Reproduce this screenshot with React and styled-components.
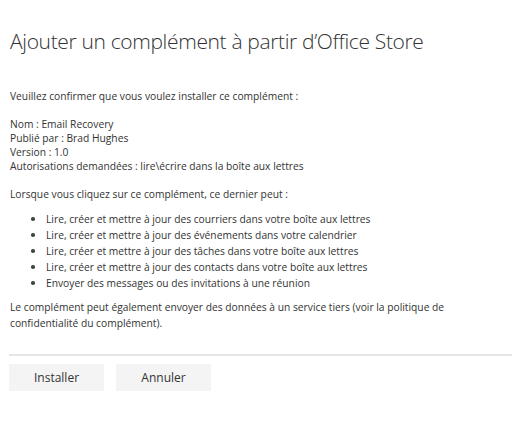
import React from 'react';
import styled, { createGlobalStyle } from 'styled-components';

const GlobalStyle = createGlobalStyle`
  html, body {
    margin: 0;
    padding: 0;
    background: #ffffff;
  }
  body {
    font-family: "Open Sans", "Noto Sans", sans-serif;
    color: #333333;
  }
`;

const Dialog = styled.div`
  width: 503px;
  padding: 26px 0 0 9px;
  box-sizing: content-box;
`;

const Title = styled.h1`
  margin: 0 0 0 1px;
  font-size: 21px;
  font-weight: 300;
  line-height: 30px;
  color: #333333;
  letter-spacing: -0.35px;
`;

const Body = styled.div`
  margin: 33px 0 0 1px;
  font-size: 10.25px;
  line-height: 14px;
  color: #333333;
  max-width: 450px;
`;

const Paragraph = styled.p`
  margin: 0 0 ${({ $gap }) => ($gap === undefined ? 14 : $gap)}px 0;
  line-height: ${({ $lh }) => $lh || 14}px;
`;

const Perms = styled.ul`
  margin: 0 0 8px 0;
  padding: 0 0 0 21px;
  line-height: 16px;
  list-style: none;
`;

const Perm = styled.li`
  display: flex;
  align-items: center;

  &::before {
    content: '';
    flex: none;
    width: 3.5px;
    height: 3.5px;
    border-radius: 50%;
    background: #444444;
    margin-right: 11.5px;
  }
`;

const Divider = styled.hr`
  margin: 23px 0 0 0;
  border: none;
  height: 2px;
  background: #e6e6e6;
`;

const Actions = styled.div`
  display: flex;
  gap: 12px;
  margin-top: 8px;
`;

const Button = styled.button`
  width: 95px;
  height: 27px;
  border: none;
  background: #f4f4f4;
  color: #333333;
  font-family: "Open Sans", "Noto Sans", sans-serif;
  font-size: 12px;
  padding: 0;
  cursor: pointer;
`;

const permissions = [
  'Lire, créer et mettre à jour des courriers dans votre boîte aux lettres',
  'Lire, créer et mettre à jour des événements dans votre calendrier',
  'Lire, créer et mettre à jour des tâches dans votre boîte aux lettres',
  'Lire, créer et mettre à jour des contacts dans votre boîte aux lettres',
  'Envoyer des messages ou des invitations à une réunion',
];

export default function App() {
  return (
    <>
      <GlobalStyle />
      <Dialog>
        <Title>Ajouter un complément à partir d’Office Store</Title>
        <Body>
          <Paragraph>Veuillez confirmer que vous voulez installer ce complément :</Paragraph>
          <Paragraph>
            Nom : Email Recovery<br />
            Publié par : Brad Hughes<br />
            Version : 1.0<br />
            Autorisations demandées : lire\écrire dans la boîte aux lettres
          </Paragraph>
          <Paragraph $gap={10}>Lorsque vous cliquez sur ce complément, ce dernier peut :</Paragraph>
          <Perms>
            {permissions.map((p) => (
              <Perm key={p}>{p}</Perm>
            ))}
          </Perms>
          <Paragraph $lh={16} $gap={0}>
            Le complément peut également envoyer des données à un service tiers (voir la politique de
            confidentialité du complément).
          </Paragraph>
        </Body>
        <Divider />
        <Actions>
          <Button>Installer</Button>
          <Button>Annuler</Button>
        </Actions>
      </Dialog>
    </>
  );
}
